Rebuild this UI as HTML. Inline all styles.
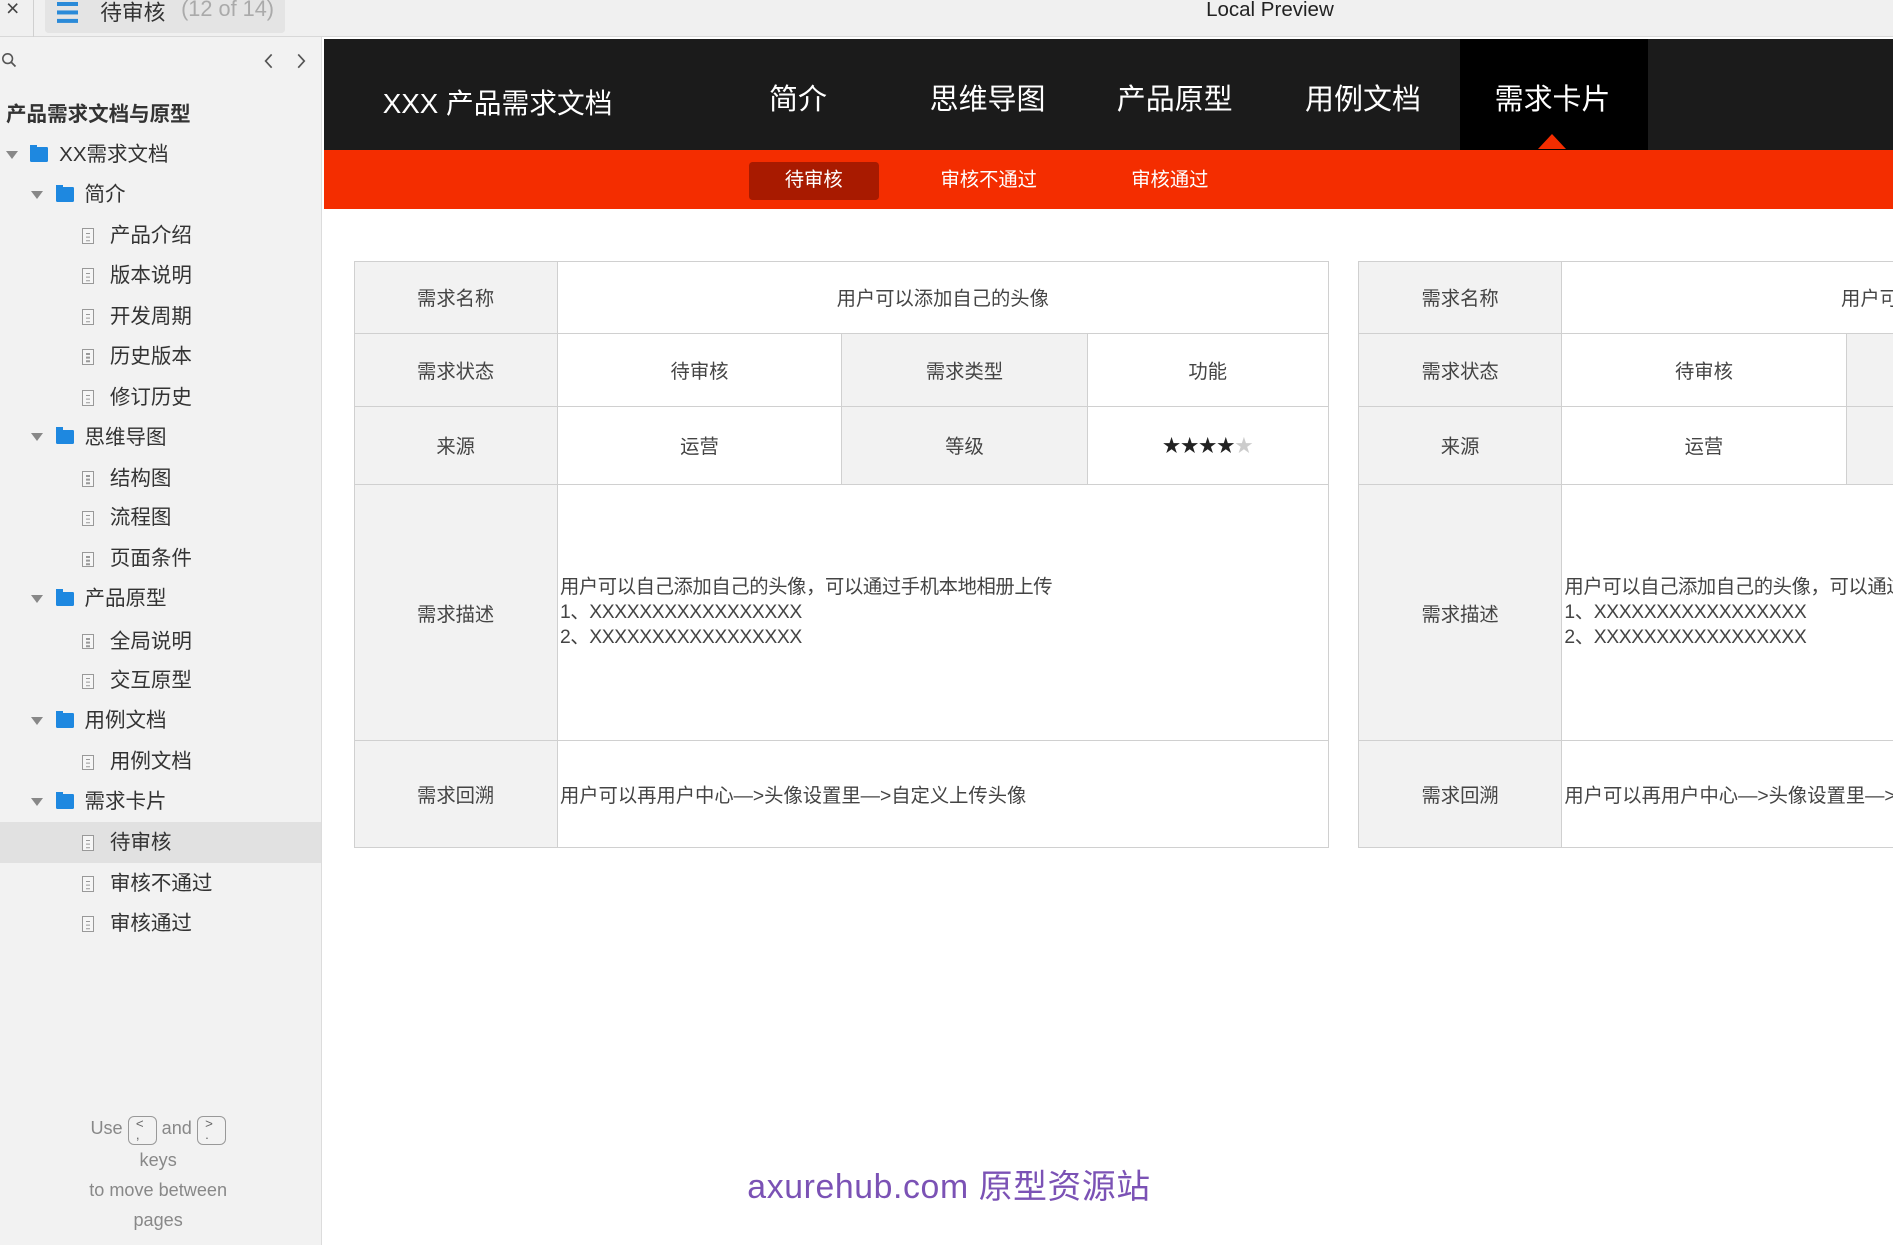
<!DOCTYPE html>
<html><head><meta charset="utf-8"><style>
*{margin:0;padding:0;box-sizing:border-box}
html,body{width:1893px;height:1245px;overflow:hidden;background:#fff}
#w{position:relative;width:1568px;height:1031px;overflow:hidden;zoom:1.20727;font-family:"Liberation Sans","Noto Sans CJK SC",sans-serif;color:#333}
.a{position:absolute}
.top{left:0;top:0;width:1568px;height:31px;background:#f0f0f0;border-bottom:1px solid #d8d8d8}
.side{left:0;top:31px;width:267px;height:1000px;background:#f2f2f2;border-right:1px solid #dcdcdc}
.row{position:absolute;left:0;width:266px;height:34px;line-height:34px;font-size:17px;color:#333;white-space:nowrap}
.tri{position:absolute;top:14px;width:0;height:0;border-left:5px solid transparent;border-right:5px solid transparent;border-top:7px solid #888}
.fold{position:absolute;top:11px;width:15px;height:12px;background:#1e88e0;border-radius:1px}
.fold:before{content:"";position:absolute;left:0;top:-2px;width:6px;height:3px;background:#1e88e0}
.file{position:absolute;top:11px;width:10px;height:13px;border:1px solid #999;background:#f6f6f6}
.file:before{content:"";position:absolute;left:2px;top:3px;width:4px;height:1px;background:#999;box-shadow:0 3px 0 #999,0 6px 0 #999}
.hdr{left:268px;top:32px;width:1300px;height:92px;background:#1b1b1b}
.nav{position:absolute;top:32px;height:92px;line-height:102px;font-size:24px;color:#fff;text-align:center}
.red{left:268px;top:124px;width:1300px;height:49px;background:#f42d00}
.sub{position:absolute;top:134px;height:32px;line-height:32px;font-size:16px;color:#fff;text-align:center}
table{position:absolute;border-collapse:collapse;font-size:16px;color:#444;table-layout:fixed}
td{border:1px solid #d0d0d0;text-align:center;background:#fff}
td.g{background:#f2f2f2}
.key{display:inline-block;width:24px;height:24px;border:1px solid #999;border-radius:5px;vertical-align:-4px;font-size:11px;line-height:9px;text-align:left;padding:2px 0 0 6px;color:#666}
</style></head><body><div id="w">
<div class="a top"></div>
<div class="a" style="left:5px;top:-4px;font-size:19px;color:#444">×</div>
<div class="a" style="left:27px;top:0;width:1px;height:31px;background:#d0d0d0"></div>
<div class="a" style="left:37px;top:0;width:199px;height:27px;background:#e4e4e4;border-radius:0 0 3px 3px"></div>
<div class="a" style="left:47px;top:2px;width:18px;height:3px;background:#2a8ad8;box-shadow:0 7px 0 #2a8ad8,0 14px 0 #2a8ad8"></div>
<div class="a" style="left:83px;top:-3px;font-size:18px;color:#333">待审核</div>
<div class="a" style="left:150px;top:-3px;font-size:18px;color:#aaa">(12 of 14)</div>
<div class="a" style="left:999px;top:-2px;font-size:17px;color:#222">Local Preview</div>
<div class="a side"></div>
<svg class="a" style="left:1px;top:43px" width="14" height="14"><circle cx="5.5" cy="5.5" r="4" fill="none" stroke="#555" stroke-width="1.3"/><line x1="8.5" y1="8.5" x2="12" y2="12" stroke="#555" stroke-width="1.4"/></svg>
<svg class="a" style="left:217px;top:43px" width="40" height="15"><path d="M8 2 L3 7.5 L8 13" fill="none" stroke="#555" stroke-width="1.4"/><path d="M30 2 L35 7.5 L30 13" fill="none" stroke="#555" stroke-width="1.4"/></svg>
<div class="a" style="left:5px;top:80px;font-size:17px;font-weight:bold;color:#333">产品需求文档与原型</div>
<div class="a" style="left:0;top:681px;width:266px;height:34px;background:#e1e1e1"></div>
<div class="a" style="left:0;top:922px;width:262px;text-align:center;font-size:15px;color:#888;line-height:25px">Use <span class="key">&lt;<br>,</span> and <span class="key">&gt;<br>.</span><br>keys<br>to move between<br>pages</div>
<div class="a hdr"></div>
<div class="a" style="left:1209px;top:32px;width:156px;height:92px;background:#000"></div>
<div class="a" style="left:1274px;top:111px;width:0;height:0;border-left:12px solid transparent;border-right:12px solid transparent;border-bottom:13px solid #f42d00"></div>
<div class="a" style="left:317px;top:67px;font-size:23px;color:#fff">XXX 产品需求文档</div>
<div class="nav" style="left:611px;width:100px">简介</div>
<div class="nav" style="left:758px;width:120px">思维导图</div>
<div class="nav" style="left:913px;width:120px">产品原型</div>
<div class="nav" style="left:1069px;width:120px">用例文档</div>
<div class="nav" style="left:1226px;width:120px">需求卡片</div>
<div class="a red"></div>
<div class="sub" style="left:620px;width:108px;background:#a81a00;border-radius:3px">待审核</div>
<div class="sub" style="left:759px;width:120px">审核不通过</div>
<div class="sub" style="left:919px;width:100px">审核通过</div>

<table style="left:293px;top:216px;width:807px">
<colgroup><col style="width:168px"><col style="width:236px"><col style="width:203px"><col style="width:200px"></colgroup>
<tr style="height:60px"><td class="g">需求名称</td><td colspan="3">用户可以添加自己的头像</td></tr>
<tr style="height:60px"><td class="g">需求状态</td><td>待审核</td><td class="g">需求类型</td><td>功能</td></tr>
<tr style="height:65px"><td class="g">来源</td><td>运营</td><td class="g">等级</td><td><span style="color:#222;font-size:15px">★★★★</span><span style="color:#ccc;font-size:15px">★</span></td></tr>
<tr style="height:212px"><td class="g">需求描述</td><td colspan="3" style="text-align:left;line-height:21px;padding-left:2px;letter-spacing:-0.3px">用户可以自己添加自己的头像，可以通过手机本地相册上传<br>1、XXXXXXXXXXXXXXXXX<br>2、XXXXXXXXXXXXXXXXX</td></tr>
<tr style="height:89px"><td class="g">需求回溯</td><td colspan="3" style="text-align:left;padding-left:2px">用户可以再用户中心—&gt;头像设置里—&gt;自定义上传头像</td></tr>
</table>
<table style="left:1125px;top:216px;width:807px">
<colgroup><col style="width:168px"><col style="width:236px"><col style="width:203px"><col style="width:200px"></colgroup>
<tr style="height:60px"><td class="g">需求名称</td><td colspan="3">用户可以添加自己的头像</td></tr>
<tr style="height:60px"><td class="g">需求状态</td><td>待审核</td><td class="g">需求类型</td><td>功能</td></tr>
<tr style="height:65px"><td class="g">来源</td><td>运营</td><td class="g">等级</td><td>★★★★★</td></tr>
<tr style="height:212px"><td class="g">需求描述</td><td colspan="3" style="text-align:left;line-height:21px;padding-left:2px;letter-spacing:-0.3px">用户可以自己添加自己的头像，可以通过手机本地相册上传<br>1、XXXXXXXXXXXXXXXXX<br>2、XXXXXXXXXXXXXXXXX</td></tr>
<tr style="height:89px"><td class="g">需求回溯</td><td colspan="3" style="text-align:left;padding-left:2px">用户可以再用户中心—&gt;头像设置里—&gt;自定义上传头像</td></tr>
</table>
<div class="a" style="left:619px;top:960px;font-size:28px;color:#7b52b5;letter-spacing:0.5px">axurehub.com 原型资源站</div>

<div class="row" style="top:111px"><i class="tri" style="left:5px"></i><i class="fold" style="left:25px"></i><span style="position:absolute;left:49px">XX需求文档</span></div>
<div class="row" style="top:144px"><i class="tri" style="left:26px"></i><i class="fold" style="left:46px"></i><span style="position:absolute;left:70px">简介</span></div>
<div class="row" style="top:178px"><i class="file" style="left:68px"></i><span style="position:absolute;left:91px">产品介绍</span></div>
<div class="row" style="top:211px"><i class="file" style="left:68px"></i><span style="position:absolute;left:91px">版本说明</span></div>
<div class="row" style="top:245px"><i class="file" style="left:68px"></i><span style="position:absolute;left:91px">开发周期</span></div>
<div class="row" style="top:278px"><i class="file" style="left:68px"></i><span style="position:absolute;left:91px">历史版本</span></div>
<div class="row" style="top:312px"><i class="file" style="left:68px"></i><span style="position:absolute;left:91px">修订历史</span></div>
<div class="row" style="top:345px"><i class="tri" style="left:26px"></i><i class="fold" style="left:46px"></i><span style="position:absolute;left:70px">思维导图</span></div>
<div class="row" style="top:379px"><i class="file" style="left:68px"></i><span style="position:absolute;left:91px">结构图</span></div>
<div class="row" style="top:412px"><i class="file" style="left:68px"></i><span style="position:absolute;left:91px">流程图</span></div>
<div class="row" style="top:446px"><i class="file" style="left:68px"></i><span style="position:absolute;left:91px">页面条件</span></div>
<div class="row" style="top:479px"><i class="tri" style="left:26px"></i><i class="fold" style="left:46px"></i><span style="position:absolute;left:70px">产品原型</span></div>
<div class="row" style="top:514px"><i class="file" style="left:68px"></i><span style="position:absolute;left:91px">全局说明</span></div>
<div class="row" style="top:547px"><i class="file" style="left:68px"></i><span style="position:absolute;left:91px">交互原型</span></div>
<div class="row" style="top:580px"><i class="tri" style="left:26px"></i><i class="fold" style="left:46px"></i><span style="position:absolute;left:70px">用例文档</span></div>
<div class="row" style="top:614px"><i class="file" style="left:68px"></i><span style="position:absolute;left:91px">用例文档</span></div>
<div class="row" style="top:647px"><i class="tri" style="left:26px"></i><i class="fold" style="left:46px"></i><span style="position:absolute;left:70px">需求卡片</span></div>
<div class="row" style="top:681px"><i class="file" style="left:68px"></i><span style="position:absolute;left:91px">待审核</span></div>
<div class="row" style="top:715px"><i class="file" style="left:68px"></i><span style="position:absolute;left:91px">审核不通过</span></div>
<div class="row" style="top:748px"><i class="file" style="left:68px"></i><span style="position:absolute;left:91px">审核通过</span></div>
</div></body></html>
